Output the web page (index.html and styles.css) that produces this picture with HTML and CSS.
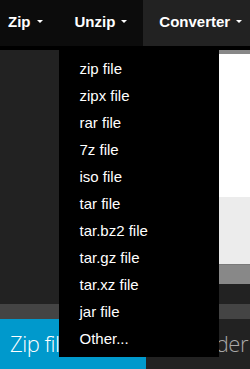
FILE: index.html
```html
<!DOCTYPE html>
<html lang="en">
<head>
    <meta charset="UTF-8">
    <title>Converter</title>
    <link rel="stylesheet" href="styles.css">
</head>
<body>
<!--顶部导航:Unzip下拉菜单是展开状态-->
<nav class="topbar">
    <ul class="nav">
        <li class="navItem first">Zip<em class="caret"></em></li>
        <li class="navItem open">
            Unzip<em class="caret"></em>
            <ul class="dropdown">
                <li>zip file</li>
                <li>zipx file</li>
                <li>rar file</li>
                <li>7z file</li>
                <li>iso file</li>
                <li>tar file</li>
                <li>tar.bz2 file</li>
                <li>tar.gz file</li>
                <li>tar.xz file</li>
                <li>jar file</li>
                <li>Other...</li>
            </ul>
        </li>
        <li class="navItem active">Converter<em class="caret"></em></li>
    </ul>
</nav>
<div class="workspace">
    <div class="sidebar"></div>
    <div class="panel">
        <div class="panelBody"></div>
        <div class="panelFoot"></div>
        <div class="panelBar"></div>
        <div class="panelEnd"></div>
    </div>
</div>
<div class="strip"></div>
<ul class="tabs">
    <li class="tab current">Zip files</li>
    <li class="tab rest">Zip folder</li>
</ul>
</body>
</html>
```
FILE: styles.css
```css
* {
    margin: 0;
    padding: 0;
    box-sizing: border-box;
}
html, body {
    background: #000;
    overflow: hidden;
}
ul, li {
    list-style: none;
}
.topbar {
    height: 46px;
    background: #0c0c0c;
    font-family: "Liberation Sans", Arial, sans-serif;
}
.nav {
    display: flex;
    height: 100%;
}
.navItem {
    position: relative;
    display: flex;
    align-items: center;
    padding: 0 16px 3px;
    color: #fff;
    font-size: 15px;
    font-weight: bold;
}
.navItem.first {
    padding-left: 8px;
}
.navItem.active {
    flex: 1;
    background: #222;
}
.caret {
    display: block;
    margin-left: 6px;
    border-top: 3px solid #fff;
    border-left: 3px solid transparent;
    border-right: 3px solid transparent;
}
/*展开的下拉菜单盖在内容上面*/
.dropdown {
    position: absolute;
    left: 0;
    top: 100%;
    z-index: 10;
    width: 160px;
    padding: 9px 0 5px;
    background: #000;
}
.dropdown li {
    padding-left: 21px;
    height: 27px;
    line-height: 27px;
    font-size: 15px;
    font-weight: normal;
    color: #fff;
}
.workspace {
    display: flex;
    height: 258px;
    padding-top: 4px;
}
.sidebar {
    width: 140px;
    background: #222;
}
.panel {
    flex: 1;
    display: flex;
    flex-direction: column;
    margin-left: 10px;
    border-top: 4px solid #888;
}
.panelBody {
    height: 143px;
    background: #fff;
}
.panelFoot {
    height: 67px;
    background: #ececec;
}
.panelBar {
    height: 20px;
    background: #888;
    border-top: 1px solid #7a7a7a;
}
.panelEnd {
    flex: 1;
    background: #222;
}
.strip {
    height: 15px;
    background: #444;
}
.tabs {
    display: flex;
    height: 50px;
    background: #222;
    font-family: "Open Sans", "Noto Sans", sans-serif;
    font-weight: 300;
    font-size: 22px;
    letter-spacing: -0.5px;
}
.tab {
    padding: 0 10px;
    line-height: 48px;
    color: #a8a8a8;
    white-space: nowrap;
}
.tab.current {
    width: 146px;
    background: #0099cc;
    color: #fff;
}
.tab.rest {
    flex: 1;
    padding-right: 2px;
    text-align: right;
}
```
